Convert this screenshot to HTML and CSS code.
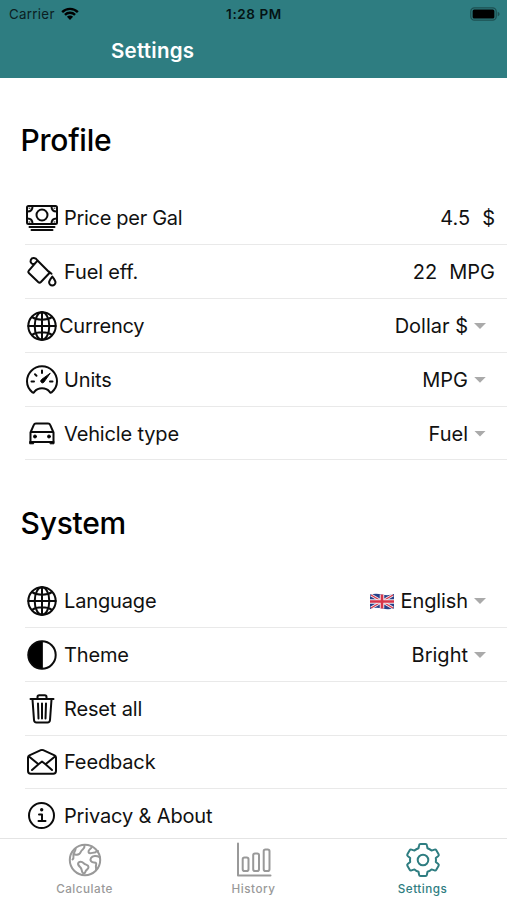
FILE: index.html
```html
<!DOCTYPE html>
<html lang="en">
<head>
<meta charset="utf-8">
<title>Settings</title>
<link rel="stylesheet" href="styles.css">
</head>
<body>
<svg class="defs" aria-hidden="true">
  <symbol id="globe" viewBox="0 0 32 32"><circle cx="16" cy="16" r="13.7"/><ellipse cx="16" cy="16" rx="7.3" ry="13.7"/><path d="M16 2.300v27.400M2.300 16h27.400M6 7.200c5 3.400 15 3.400 20 0M6 24.800c5-3.400 15-3.400 20 0"/></symbol>
</svg>
<div class="app">
  <header class="header">
    <div class="status">
      <div class="carrier"><span>Carrier</span>
        <svg class="wifi" viewBox="0 0 18 13"><path d="M.3 4.2a12.500 12.500 0 0 1 17.400 0l-1.700 1.700a10 10 0 0 0-14 0zM3.100 7a8.400 8.400 0 0 1 11.800 0l-1.700 1.700a6 6 0 0 0-8.400 0zM5.900 9.800a4.400 4.400 0 0 1 6.200 0L9 12.900z"/></svg>
      </div>
      <div class="clock">1:28 PM</div>
      <svg class="battery" viewBox="0 0 31 14"><rect class="shell" x=".8" y=".8" width="25.4" height="12.4" rx="3.6"/><rect x="2.6" y="2.6" width="21.8" height="8.8" rx="1.5"/><path class="tip" d="M27.700 4.700c2.500 1 2.500 3.600 0 4.600z"/></svg>
    </div>
    <h1 class="title">Settings</h1>
  </header>
  <main class="content">
    <section class="group">
      <h2 class="heading">Profile</h2>
      <div class="row"><svg class="icon" viewBox="0 0 32 32"><rect x="1" y="4" width="30" height="18" rx="1.5"/><circle cx="16" cy="13" r="5.5"/><path d="M1.500 9.500c3.500 0 5-2 5-5M30.500 9.500c-3.500 0-5-2-5-5M1.500 16.500c3.500 0 5 2 5 5M30.500 16.500c-3.500 0-5 2-5 5M3.500 25h25M5.500 28h21"/><path class="thin" d="M3 6.200h1M28 6.200h1M3 20h1M28 20h1"/></svg><span class="label price">Price per Gal</span><span class="value">4.5</span><span class="unit">$</span></div>
      <div class="row"><svg class="icon" viewBox="0 0 32 32"><path d="M10.200 6.200 2.800 14.600c-.8.900-.8 1.600 0 2.400l9.400 9c1 .9 1.800.9 2.700 0l8.800-9.300L11.500 4.500C9.600 1.500 6 1.300 4.800 4c-1 2.300 1.300 4.800 3.600 3.900l3.200-3.300M22.500 15.200l3 2.600"/><path d="M26.300 20.600c1.900 2.500 3.200 4.100 3.200 5.700a3.200 3.200 0 0 1-6.400 0c0-1.600 1.300-3.200 3.200-5.700z"/></svg><span class="label">Fuel eff.</span><span class="value">22</span><span class="unit">MPG</span></div>
      <div class="row"><svg class="icon"><use href="#globe"/></svg><span class="label close">Currency</span><span class="value">Dollar $</span><i class="caret"></i></div>
      <div class="row"><svg class="icon" viewBox="0 0 32 32"><path d="M6.500 28.400C3.200 25.700 1 22 1 17.300a15 15 0 0 1 30 0c0 4.700-2.200 8.400-5.500 11.100-1 .7-1.500 0-2-.8-3.600-4.500-11.400-4.500-15 0-.5.8-1 1.500-2 .8z"/><path d="M16 6.500v2.500M5.500 17.500h2.500M24 17.500h2.500M9 10.300l1.500 1.400"/><path class="solid slim" d="m24 9.500-6.200 8.800c-1.200 1.400-3.500.2-3-1.700.1-.4.4-.7.700-1z"/></svg><span class="label">Units</span><span class="value">MPG</span><i class="caret"></i></div>
      <div class="row"><svg class="icon" viewBox="0 0 32 32"><path d="M4.500 14.500 7.600 7.300C8.100 6.100 8.700 5.600 9.900 5.600h12.200c1.200 0 1.800.5 2.300 1.700l3.100 7.200v9.500h-23zM5 14h22"/><path class="solid slim" d="M4 23.500h3.600v2.300H4zM24.400 23.500H28v2.300h-3.600z"/><circle class="solid slim" cx="9" cy="18.500" r="1.500"/><circle class="solid slim" cx="23" cy="18.500" r="1.500"/></svg><span class="label">Vehicle type</span><span class="value">Fuel</span><i class="caret"></i></div>
    </section>
    <section class="group">
      <h2 class="heading">System</h2>
      <div class="row"><svg class="icon"><use href="#globe"/></svg><span class="label">Language</span>
        <svg class="flag" viewBox="0 0 24 17"><path fill="#263f88" d="M0 1.500q6-1.500 12 0t12-.5v14.500q-6 1.500-12 0t-12 .5z"/><path stroke="#f1eef2" stroke-width="3" d="m1 2 22 13M23 2 1 15"/><path stroke="#d73549" stroke-width="1.300" d="m1 2 22 13M23 2 1 15"/><path stroke="#f1eef2" stroke-width="4.500" d="M12 1.500v14M0 8.500h24"/><path stroke="#d73549" stroke-width="2.600" d="M12 1.500v14M0 8.500h24"/></svg>
        <span class="value flagged">English</span><i class="caret"></i></div>
      <div class="row"><svg class="icon" viewBox="0 0 32 32"><circle cx="16" cy="16" r="13.7"/><path class="fill slim" d="M16 2.300a13.700 13.700 0 0 0 0 27.400z"/></svg><span class="label">Theme</span><span class="value">Bright</span><i class="caret"></i></div>
      <div class="row"><svg class="icon" viewBox="0 0 32 32"><path d="M4.500 6h23M6.500 6.500 8 27q.2 2.500 2.500 2.500h11q2.300 0 2.500-2.500l1.500-20.500M11.500 5.500V4q0-1.700 1.700-1.700h5.600q1.700 0 1.700 1.700v1.500M12 10.500l.5 15M16 10.500v15M20 10.500l-.5 15"/></svg><span class="label">Reset all</span></div>
      <div class="row"><svg class="icon" viewBox="0 0 32 32"><path d="M2 11.500q0-1.500 1.400-2.200L14.800 4.200q1.200-.5 2.400 0l11.400 5.100Q30 10 30 11.500V25q0 2.700-2.700 2.700H4.700Q2 27.700 2 25zM3 10.500l9.500 7.800L16 15.500l3.500 2.800 9.500-7.800M12.500 18.300 6 24M19.500 18.300 26 24"/></svg><span class="label">Feedback</span></div>
      <div class="row"><svg class="icon" viewBox="0 0 32 32"><circle cx="15.5" cy="15.5" r="12.5"/><path d="M13 14.500h3v6.500M12.500 21h7"/><circle class="solid" cx="15.7" cy="9.800" r=".7"/></svg><span class="label">Privacy &amp; About</span></div>
    </section>
  </main>
  <nav class="tabs">
    <a class="tab"><svg class="tab-icon" viewBox="0 0 36 36"><circle cx="18" cy="18" r="15.200"/><path d="M8.500 6.500C9 9 7 10 6.500 12s1 4-1 5.500M8 12.500c3 1 5-.5 6-3s4-2 3.500-6M11.500 20.500c2-1.500 4-.5 5.500 1s4.500 1 4.500 3.500-2.500 2.500-3 4.500-2 2.500-3 1-.5-3.500-2-5-3.500-3-2-5zM25 4.500c-.5 2.500-4 3-3.500 5.500s4 .5 6 .5 1.500-2 3.500-1.500M32.500 15c-3-1.500-7-1.500-8.500 1s.5 4.500 3 4.500 2.500 1 2 3 .5 2.500 0 4"/></svg><span>Calculate</span></a>
    <a class="tab"><svg class="tab-icon" viewBox="0 0 36 36"><path d="M2 1.500V33.500h32.500"/><rect x="6.700" y="15.500" width="5.800" height="13.500" rx="1.800"/><rect x="17.200" y="11.500" width="5.800" height="17.500" rx="1.800"/><rect x="27.700" y="7.500" width="5.800" height="21.500" rx="1.800"/></svg><span>History</span></a>
    <a class="tab active"><svg class="tab-icon" viewBox="0 0 36 36"><circle cx="18" cy="18" r="5.300"/><path d="M15.500 2h5q1.200 0 1.400 1.200l.6 3.100q2.300.8 4 2.300l3-1q1.200-.4 1.800.6l2.300 4q.6 1-.3 1.800l-2.500 2.100q.4 1.900 0 3.800l2.500 2.100q.9.800.3 1.800l-2.300 4q-.6 1-1.800.6l-3-1q-1.700 1.500-4 2.300l-.6 3.100q-.2 1.200-1.400 1.200h-5q-1.200 0-1.400-1.200l-.6-3.100q-2.300-.8-4-2.300l-3 1q-1.200.4-1.800-.6l-2.300-4q-.6-1 .3-1.800l2.500-2.100q-.4-1.900 0-3.800l-2.500-2.100q-.9-.8-.3-1.800l2.300-4q.6-1 1.800-.6l3 1q1.700-1.500 4-2.300l.6-3.100Q14.300 2 15.500 2z"/></svg><span>Settings</span></a>
  </nav>
</div>
</body>
</html>
```
FILE: styles.css
```css
* { box-sizing: border-box; }
body { margin: 0; font-family: Inter, "Liberation Sans", sans-serif; color: #111; background: #fff; }
.defs { display: block; width: 0; height: 0; }
.app { display: flex; flex-direction: column; height: 900px; overflow: hidden; }
.header { flex: none; height: 78px; background: #2e7d81; }
.status { display: grid; grid-template-columns: 1fr auto 1fr; align-items: center; height: 27px; padding: 0 6px 0 7px; font-size: 13px; color: #0b2022; }
.carrier { display: flex; align-items: center; gap: 6px; padding-left: 2px; font-size: 13.300px; letter-spacing: .3px; }
.wifi { width: 18px; height: 13px; fill: #000; }
.clock { font-size: 13.500px; font-weight: 600; letter-spacing: .6px; color: #041314; }
.battery { justify-self: end; width: 31px; height: 14px; }
.shell { fill: none; stroke: #1d5052; stroke-width: 1.3; }
.tip { fill: #1d5052; }
.title { margin: 12px 0 0 111px; font-size: 20.500px; line-height: 24px; font-weight: 600; letter-spacing: .25px; color: #fff; }
.content { flex: 1; min-height: 0; overflow: hidden; padding-top: 36px; }
.group { height: 382.700px; }
.heading { height: 53px; margin: 0 0 24.500px 20.500px; line-height: 52px; font-size: 30px; font-weight: 500; letter-spacing: -.25px; color: #000; }
.row { display: flex; align-items: center; height: 53.800px; margin-left: 25px; padding: 1px 12px 0 0; border-bottom: 1.500px solid #e9e9e9; font-size: 20px; white-space: nowrap; }
.icon { flex: none; width: 32px; height: 32px; margin-left: 1px; }
.icon, .tab-icon { fill: none; stroke: #0b0b0b; stroke-width: 2; stroke-linecap: round; stroke-linejoin: round; }
.thin, .slim { stroke-width: 1; }
.solid, .fill { fill: #000; }
.label { margin-left: 6px; letter-spacing: -.15px; }
.price { width: 118px; overflow: hidden; letter-spacing: -.3px; }
.close { margin-left: 1px; letter-spacing: -.25px; }
.value { margin-left: auto; }
.unit { margin-left: 12px; }
.caret { width: 12px; height: 6px; margin: 0 9px 0 6px; background: #aaa; clip-path: polygon(0 0, 100% 0, 50% 100%); }
.flag { width: 24px; height: 17px; margin-left: auto; }
.flagged { margin-left: 7px; letter-spacing: -.1px; }
.tabs { flex: none; display: grid; grid-template-columns: repeat(3, 1fr); height: 62px; border-top: 1px solid #e4e4e4; background: #fff; }
.tab { display: flex; flex-direction: column; align-items: center; padding-top: 3px; color: #999; font-size: 11.700px; line-height: 16px; font-weight: 500; letter-spacing: .5px; }
.tab-icon { width: 36px; height: 36px; margin-bottom: 3px; stroke: #999; }
.active { color: #2e7d81; }
.active .tab-icon { stroke: #2e7d81; }
```
